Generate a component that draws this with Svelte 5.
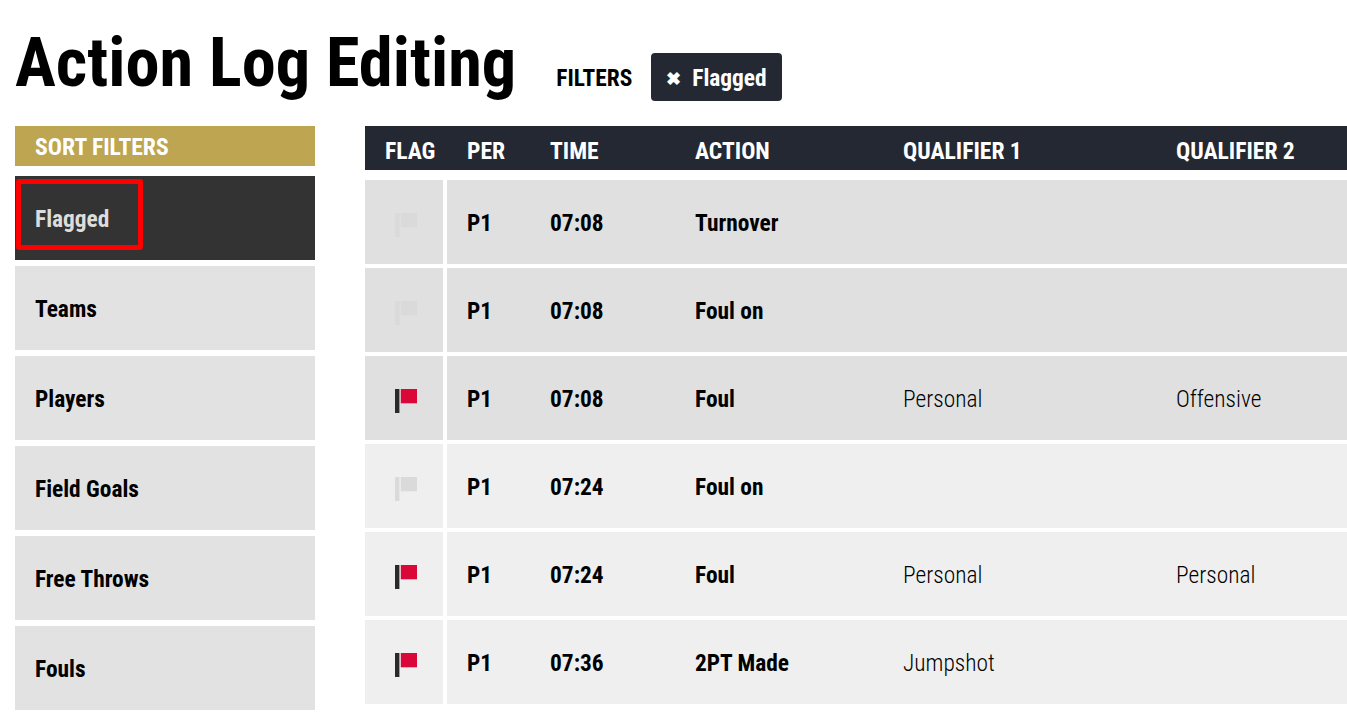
<script>
  const filters = ["Teams", "Players", "Field Goals", "Free Throws", "Fouls"];
  const rows = [
    { flag: false, time: "07:08", action: "Turnover", q1: "", q2: "", tone: "dark" },
    { flag: false, time: "07:08", action: "Foul on", q1: "", q2: "", tone: "dark" },
    { flag: true, time: "07:08", action: "Foul", q1: "Personal", q2: "Offensive", tone: "dark" },
    { flag: false, time: "07:24", action: "Foul on", q1: "", q2: "", tone: "light" },
    { flag: true, time: "07:24", action: "Foul", q1: "Personal", q2: "Personal", tone: "light" },
    { flag: true, time: "07:36", action: "2PT Made", q1: "Jumpshot", q2: "", tone: "light" }
  ];
</script>

<main>
  <header class="top">
    <h1>Action Log Editing</h1>
    <span class="filters-label">FILTERS</span>
    <button class="chip"><span class="x">✖</span>Flagged</button>
  </header>

  <div class="body">
    <aside>
      <div class="sort-head">SORT FILTERS</div>
      <div class="filter active">Flagged<span class="mark"></span></div>
      {#each filters as f}
        <div class="filter">{f}</div>
      {/each}
    </aside>

    <section class="log">
      <div class="row head">
        <div class="c-flag">FLAG</div>
        <div class="c-per">PER</div>
        <div class="c-time">TIME</div>
        <div class="c-action">ACTION</div>
        <div class="c-q1">QUALIFIER 1</div>
        <div class="c-q2">QUALIFIER 2</div>
      </div>
      {#each rows as r}
        <div class="row {r.tone}">
          <div class="flagcell">
            <svg width="22" height="24" viewBox="0 0 22 24" class:on={r.flag}>
              <rect class="pole" x="0" y="0" width="4.4" height="24" />
              <rect class="cloth" x="5.8" y="0" width="16.2" height="14.3" />
            </svg>
          </div>
          <div class="cells">
            <div class="c-per strong">P1</div>
            <div class="c-time strong">{r.time}</div>
            <div class="c-action strong">{r.action}</div>
            <div class="c-q1 thin">{r.q1}</div>
            <div class="c-q2 thin">{r.q2}</div>
          </div>
        </div>
      {/each}
    </section>
  </div>
</main>

<style>
  :global(body) {
    margin: 0;
    background: #fff;
    font-family: "Roboto Condensed", Roboto, "Liberation Sans", sans-serif;
    font-stretch: condensed;
  }
  main {
    padding: 0 0 0 15px;
    height: 716px;
    box-sizing: border-box;
    overflow: hidden;
  }
  .top {
    display: flex;
    align-items: center;
    height: 126px;
  }
  h1 {
    margin: 0 40px 0 0;
    font-size: 68.4px;
    font-weight: 700;
    color: #000;
  }
  .filters-label {
    font-size: 23.4px;
    font-weight: 700;
    margin: 30px 19px 0 0;
  }
  .chip {
    margin-top: 28px;
    height: 48px;
    width: 131px;
    padding: 2px 0 0 15px;
    display: flex;
    align-items: center;
    border: 0;
    border-radius: 4px;
    background: #242833;
    color: #fff;
    font: inherit;
    font-size: 23.4px;
    font-weight: 700;
  }
  .x {
    font-size: 18px;
    margin-right: 11px;
  }
  .body {
    display: flex;
    gap: 50px;
  }
  aside {
    width: 300px;
    flex: none;
    display: flex;
    flex-direction: column;
    gap: 6px;
  }
  .sort-head {
    height: 40px;
    margin-bottom: 4px;
    padding-left: 20px;
    background: #bda551;
    color: #fff;
    font-size: 23.6px;
    font-weight: 700;
    line-height: 42px;
  }
  .filter {
    position: relative;
    height: 84px;
    padding-left: 20px;
    background: #e2e2e2;
    color: #000;
    font-size: 23.4px;
    font-weight: 700;
    line-height: 86px;
  }
  .filter.active {
    background: #333;
    color: #ddd;
  }
  .mark {
    position: absolute;
    left: 1px;
    top: 3px;
    width: 117px;
    height: 61px;
    border: 5px solid #f00;
    border-radius: 3px;
  }
  .log {
    flex: 1;
    display: flex;
    flex-direction: column;
    gap: 4px;
  }
  .row {
    display: flex;
    height: 84px;
    gap: 4px;
  }
  .row.head {
    height: 44px;
    margin-bottom: 6px;
    gap: 0;
    background: #242833;
    color: #fff;
    font-size: 23.6px;
    font-weight: 700;
    line-height: 50px;
  }
  .head .c-flag {
    width: 82px;
    padding-left: 20px;
    box-sizing: border-box;
  }
  .flagcell {
    width: 78px;
    flex: none;
    display: flex;
    align-items: center;
    padding: 6px 0 0 30px;
    box-sizing: border-box;
  }
  .cells {
    flex: 1;
    display: flex;
    align-items: center;
    padding-top: 2px;
    font-size: 23.4px;
  }
  .dark .flagcell, .dark .cells { background: #e0e0e0; }
  .light .flagcell, .light .cells { background: #efefef; }
  .c-per { width: 103px; padding-left: 20px; box-sizing: border-box; flex: none; }
  .c-time { width: 145px; flex: none; }
  .c-action { width: 208px; flex: none; }
  .c-q1 { width: 273px; flex: none; }
  .strong { font-weight: 700; }
  .thin { font-weight: 300; }
  svg .pole { fill: #dadada; }
  svg .cloth { fill: #dadada; }
  svg.on .pole { fill: #2a2a2a; }
  svg.on .cloth { fill: #d90838; }
</style>
